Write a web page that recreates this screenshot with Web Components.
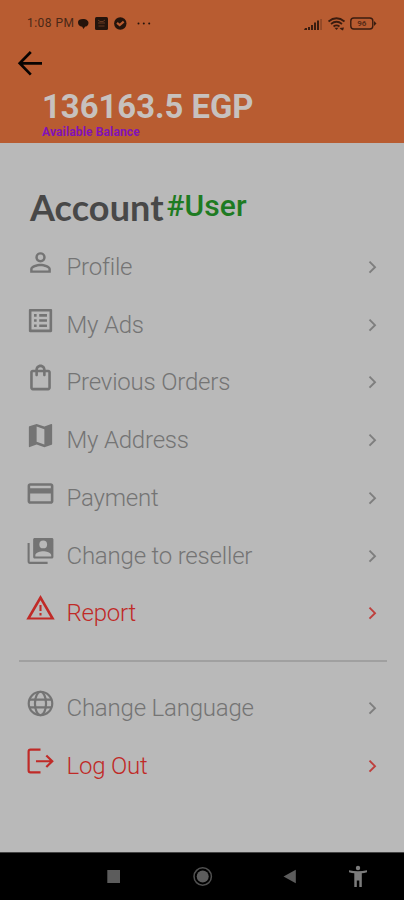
<!DOCTYPE html>
<html lang="en"><head><meta charset="utf-8"><title>Account</title>
<style>html,body{margin:0;padding:0}body{width:404px;height:900px;overflow:hidden;background:#b9b9b9;font-family:Roboto,"Liberation Sans",sans-serif}</style></head>
<body><account-screen></account-screen>
<script>
const define=(name,html,setup)=>customElements.define(name,class extends HTMLElement{
  connectedCallback(){
    if(this.shadowRoot)return;
    const t=document.createElement('template');
    t.innerHTML=html;
    this.attachShadow({mode:'open'}).append(t.content.cloneNode(true));
    if(setup)setup(this,this.shadowRoot);
  }
});
const ICONS={
  profile:'<path d="M12 5.9a2.1 2.1 0 1 1 0 4.2 2.1 2.1 0 0 1 0-4.2m0 9c2.970 0 6.100 1.460 6.100 2.100v1.100H5.900V17c0-.64 3.130-2.100 6.100-2.100M12 4C9.790 4 8 5.790 8 8s1.790 4 4 4 4-1.790 4-4-1.790-4-4-4zm0 9c-2.670 0-8 1.340-8 4v3h16v-3c0-2.660-5.330-4-8-4z"/>',
  ads:'<path d="M19 5v14H5V5h14m1.100-2H3.900c-.5 0-.9.4-.9.900v16.200c0 .4.4.9.900.900h16.200c.4 0 .9-.5.900-.9V3.900c0-.5-.5-.9-.9-.9zM11 7h6v2h-6V7zm0 4h6v2h-6v-2zm0 4h6v2h-6zM7 7h2v2H7zm0 4h2v2H7zm0 4h2v2H7z"/>',
  bag:'<path d="M18 6h-2c0-2.210-1.790-4-4-4S8 3.790 8 6H6c-1.100 0-2 .9-2 2v12c0 1.100.9 2 2 2h12c1.100 0 2-.9 2-2V8c0-1.100-.9-2-2-2zm-6-2c1.100 0 2 .9 2 2h-4c0-1.100.9-2 2-2zm6 16H6V8h2v2c0 .55.450 1 1 1s1-.45 1-1V8h4v2c0 .55.450 1 1 1s1-.45 1-1V8h2v12z"/>',
  map:'<path d="M20.500 3l-.16.030L15 5.100 9 3 3.360 4.900c-.21.070-.36.250-.36.480V20.500c0 .28.220.5.500.5l.16-.03L9 18.900l6 2.100 5.640-1.900c.21-.07.360-.25.360-.48V3.500c0-.28-.22-.5-.5-.5zM15 19l-6-2.110V5l6 2.110V19z"/>',
  card:'<path d="M20 4H4c-1.110 0-1.990.890-1.990 2L2 18c0 1.110.890 2 2 2h16c1.110 0 2-.89 2-2V6c0-1.110-.89-2-2-2zm0 14H4v-6h16v6zm0-10H4V6h16v2z"/>',
  reseller:'<path d="M3.600 5.500H2v14.300c0 1.100.7 1.800 1.800 1.800H17.500V20H3.600V5.500z"/><path fill-rule="evenodd" d="M7.500 1.500h13.300c.7 0 1.200.5 1.200 1.200v13.600c0 .7-.5 1.200-1.200 1.200H7.500c-.7 0-1.200-.5-1.200-1.200V2.700c0-.7.5-1.200 1.200-1.200zm6.600 2a3 3 0 1 0 0 6 3 3 0 0 0 0-6zM8 15.800h12.300v-.9c0-1.900-4.100-3-6.200-3S8 13 8 14.900z"/>',
  warn:'<path d="M12 5.600L19.730 19H4.270L12 5.600M12 1.600L1 20.600h22L12 1.600z"/><path d="M11.200 9.300h1.600v4.700h-1.600zM11.200 15.500h1.600v1.900h-1.600z"/>',
  globe:'<g fill="none" stroke="currentColor" stroke-width="1.700"><circle cx="12" cy="12" r="9.100"/><ellipse cx="12" cy="12" rx="4.300" ry="9.100"/><path d="M3.500 9h17M3.500 15h17"/></g>',
  logout:'<g fill="none" stroke="currentColor" stroke-width="1.700"><path d="M12 2.800H4.200q-1.400 0-1.400 1.400v14.800q0 1.400 1.400 1.400H12M8.500 11.800H21M16.500 7.300l4.600 4.500-4.600 4.500"/></g>'
};
define('status-bar',`<style>
:host{display:flex;height:46px;box-sizing:border-box;padding:16px 27px 0;color:#4a2817;align-items:flex-start}
span{flex:none;width:48px;font-size:12px;line-height:14px;letter-spacing:.04em;white-space:nowrap}svg{display:block}.left{flex:1;display:flex}
</style><div class="left"><span>1:08 PM</span>
<svg width="80" height="16" viewBox="75 15 80 16" fill="#24140c"><path d="M78 21c0-2 2-3 5-3s5.500 1.500 5.500 4-2 3.600-3.200 3.600l-2 2.400-1-2.200c-3-.2-4.300-2-4.300-4.800z"/><rect x="95" y="16" width="13" height="13" rx="1.500"/><path d="M98 19l2 1.500h3l2-1.500M98 22h7M98.500 25h6" fill="none" stroke="#663820" stroke-width="1"/><circle cx="120.300" cy="22.500" r="6.200"/><path d="M117 21.800l2.700 2.300 4-3.500" fill="none" stroke="#b85c31" stroke-width="2.200"/><circle cx="138.500" cy="22.500" r="1"/><circle cx="143.800" cy="22.500" r="1"/><circle cx="149.200" cy="22.500" r="1"/></svg></div>
<svg width="74" height="16" viewBox="303 15 74 16" style="flex:none"><path fill="#3a1c0f" d="M304 29l1-2h2v2zM308 26h2v3h-2zM311 24h2v5h-2zM314 21.500h2V29h-2zM317 19.500h2V29h-2z"/><path fill="#8a4525" d="M320.300 18h1.500v11h-1.500z"/><g fill="none" stroke="#3a1c0f" stroke-width="1.700"><path d="M328.500 20.500q8-6.500 16 0M331 23q5.500-4.500 11 0M333.500 25.500q3-2.300 6 0"/></g><path fill="#3a1c0f" d="M334.500 26.800h4l-2 2.200zM339.500 27l4.500-.5-1 3-2-1z"/><rect x="350.800" y="17" width="22" height="11" rx="3" fill="none" stroke="#3a1c0f" stroke-width="1.400"/><path fill="#3a1c0f" d="M374 20l2.500 2.500L374 25z"/><text x="361.800" y="25.300" font-family="Roboto" font-size="8" font-weight="700" text-anchor="middle" fill="#5a2c18">96</text></svg>`);
define('balance-header',`<style>
:host{display:block;height:143px;background:#b85c31}
.back{display:block;margin:3px 0 0 16px}
.amount{margin:10px 0 0 42px;font-size:32.850px;line-height:40px;font-weight:700;color:#c7c1be;white-space:nowrap}
.label{margin:-1px 0 0 42px;font-size:12px;letter-spacing:.14px;line-height:12px;font-weight:700;color:#8212b6}
</style><status-bar></status-bar>
<svg class="back" width="28" height="28" viewBox="16 49 28 28" fill="none" stroke="#080402" stroke-width="2.700"><path d="M42 63.300H20M30.800 52L19.700 63.300l11.100 11.300"/></svg>
<div class="amount"><slot name="amount"></slot></div><div class="label"><slot name="label"></slot></div>`);
define('menu-row',`<style>
:host{display:flex;height:57.75px;align-items:center;padding:0 21px 0 25.500px;color:#747474}
:host([danger]){color:#c02a27}
.icon{width:31px;height:31px;flex:none;margin:-9px 0 0 -.5px;fill:currentColor}
.text{flex:1;margin-left:10.500px;font-size:24px;letter-spacing:-.2px;line-height:30px;font-weight:300;white-space:nowrap}
.chev{width:20px;height:20px;flex:none;fill:none;stroke:currentColor;stroke-width:1.900;opacity:.85}
</style><svg class="icon" viewBox="0 0 24 24"></svg><span class="text"><slot></slot></span><svg class="chev" viewBox="0 0 20 20"><path d="M6.500 4.700l5.500 5.500-5.500 5.500"/></svg>`,
(h,r)=>{r.querySelector('.icon').innerHTML=ICONS[h.getAttribute('icon')]});
define('account-title',`<style>
:host{display:flex;align-items:baseline;height:50px;margin-left:30px;line-height:50px}
.a{font-family:Lato,sans-serif;font-size:36px;letter-spacing:.1px;font-weight:700;color:#484848}
.b{font-size:30px;letter-spacing:.15px;font-weight:500;color:#1e7b22;margin-left:2.500px;position:relative;top:-5px}
</style><span class="a"><slot></slot></span><span class="b"><slot name="tag"></slot></span>`);
define('nav-bar',`<style>
:host{display:block;height:48px;background:#000;border-top:1px solid #444;box-sizing:border-box}svg{display:block}
</style><svg width="404" height="47" viewBox="0 853 404 47"><g fill="#5c5c5c"><rect x="107.300" y="870" width="12.700" height="13"/><circle cx="202.700" cy="876.500" r="6"/><circle cx="202.700" cy="876.500" r="8.700" fill="none" stroke="#505050" stroke-width="1.500"/><path d="M283.500 876.500l12.300-6.800v13.600z"/></g><g fill="#7c7c7c"><circle cx="358" cy="868" r="2.200"/><path d="M349 870.300q9 2 18 0v2q-3 .8-5.200 1V887h-2.500v-6.500h-2.500v6.500h-2.500v-13.700q-2.500-.2-5.300-1z"/></g></svg>`);
define('account-screen',`<style>
:host{display:flex;flex-direction:column;height:900px;background:#b9b9b9}
main{flex:1;display:flex;flex-direction:column;padding-top:39px;box-sizing:border-box;min-height:0}
.list{margin-top:6px}hr{width:368px;height:2px;border:0;background:#a0a0a0;margin:17.500px 0 17.500px 19px;flex:none}
</style><balance-header><span slot="amount">136163.5 EGP</span><span slot="label">Available Balance</span></balance-header>
<main><account-title>Account<span slot="tag">#User</span></account-title>
<div class="list"><menu-row icon="profile">Profile</menu-row><menu-row icon="ads">My Ads</menu-row><menu-row icon="bag">Previous Orders</menu-row><menu-row icon="map">My Address</menu-row><menu-row icon="card">Payment</menu-row><menu-row icon="reseller">Change to reseller</menu-row><menu-row icon="warn" danger>Report</menu-row></div>
<hr><div><menu-row icon="globe">Change Language</menu-row><menu-row icon="logout" danger>Log Out</menu-row></div></main><nav-bar></nav-bar>`);
</script></body></html>
